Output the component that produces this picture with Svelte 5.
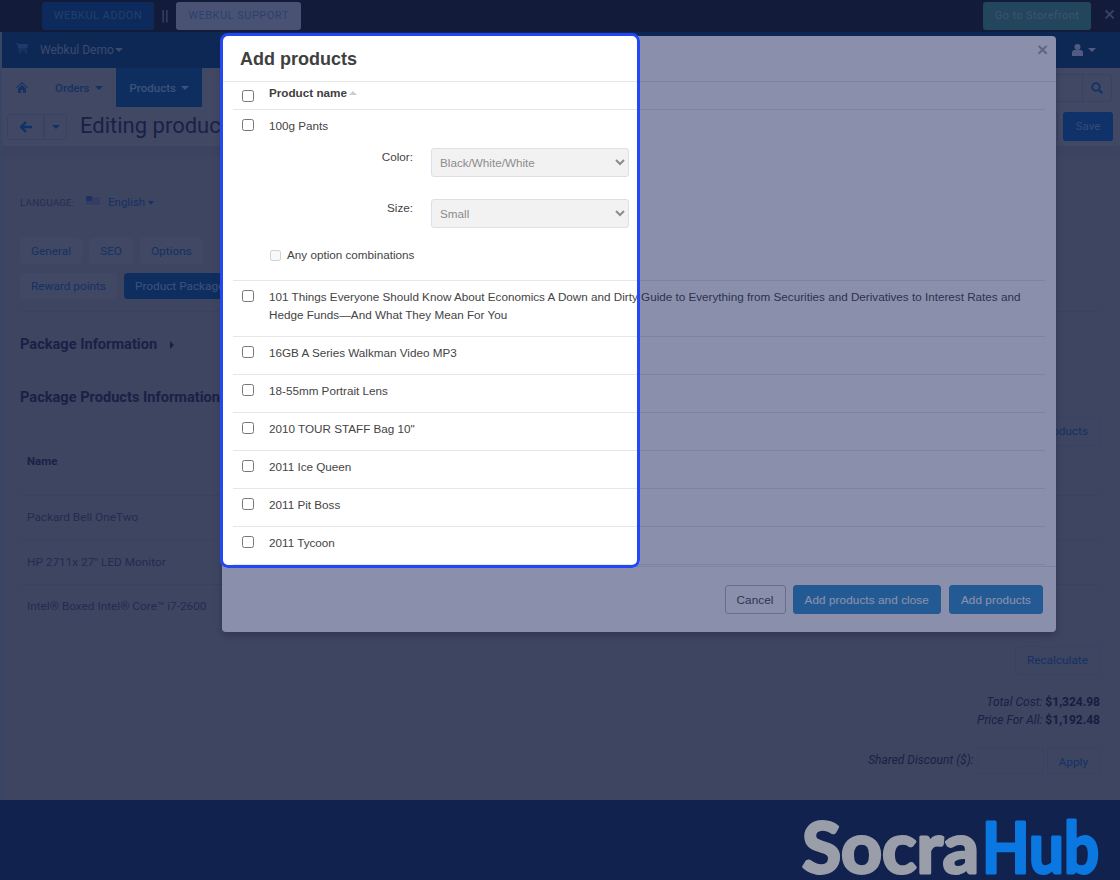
<script>
  const products = [
    { name: '16GB A Series Walkman Video MP3' },
    { name: '18-55mm Portrait Lens' },
    { name: '2010 TOUR STAFF Bag 10"' },
    { name: '2011 Ice Queen' },
    { name: '2011 Pit Boss' },
    { name: '2011 Tycoon' }
  ];
  const packageRows = ['Packard Bell OneTwo', 'HP 2711x 27" LED Monitor', 'Intel® Boxed Intel® Core™ i7-2600'];
</script>

<div class="page">
  <header class="topbar">
    <a class="top-btn addon">WEBKUL ADDON</a>
    <span class="sep">||</span>
    <a class="top-btn support">WEBKUL SUPPORT</a>
    <a class="top-btn store">Go to Storefront</a>
    <span class="top-close">×</span>
  </header>

  <div class="shell">
    <nav class="navbar">
      <svg class="cart" viewBox="0 0 12 10" width="12" height="10"><path d="M0 0h2l.4 1H12l-1 4.5H3.4l.2 1H11v1H2.8L1.4 1H0z" fill="currentColor"/><circle cx="4" cy="9" r="1" fill="currentColor"/><circle cx="10" cy="9" r="1" fill="currentColor"/></svg>
      <span class="brand">Webkul Demo</span><i class="caret"></i>
      <span class="grow"></span>
      <svg class="user" viewBox="0 0 11 12" width="11" height="12"><circle cx="5.5" cy="3" r="3" fill="currentColor"/><path d="M0 12V8.5C0 7 1.2 6 2.5 6h6C9.8 6 11 7 11 8.5V12z" fill="currentColor"/></svg>
      <i class="caret user-caret"></i>
    </nav>

    <div class="menu">
      <svg class="home" viewBox="0 0 12 11" width="12" height="11"><path d="M6 0l6 5.500-.7.7L6 1.500.7 6.200 0 5.500zM2 6.500L6 3l4 3.500V11H7V8H5v3H2z" fill="currentColor"/></svg>
      <span class="menu-item">Orders <i class="caret"></i></span>
      <span class="menu-item active">Products <i class="caret"></i></span>
      <span class="grow"></span>
      <div class="search">
        <span class="search-btn">
          <svg viewBox="0 0 12 12" width="12" height="12"><circle cx="5" cy="5" r="3.800" fill="none" stroke="currentColor" stroke-width="1.800"/><path d="M8 8l3.200 3.200" stroke="currentColor" stroke-width="2.200"/></svg>
        </span>
      </div>
    </div>

    <div class="toolbar">
      <span class="tool-btn back">
        <svg viewBox="0 0 12 12" width="12" height="12"><path d="M6 1L1 6l5 5M1.500 6H12" fill="none" stroke="currentColor" stroke-width="2.400"/></svg>
      </span>
      <span class="tool-btn more"><i class="caret"></i></span>
      <h1>Editing product</h1>
      <span class="grow"></span>
      <span class="tool-btn ghost"></span>
      <span class="save">Save</span>
    </div>

    <main class="content">
      <div class="language">
        <span class="lang-label">LANGUAGE:</span>
        <svg class="flag" viewBox="0 0 14 10" width="14" height="10"><rect width="14" height="10" fill="#6c6a74"/><path d="M0 2h14M0 4h14M0 6h14M0 8h14" stroke="#3f4763" stroke-width="1"/><rect width="6" height="5" fill="#2b3f72"/></svg>
        <span class="lang-name">English</span><i class="caret"></i>
      </div>

      <div class="tabs">
        <div class="tab-row">
          <span class="tab">General</span>
          <span class="tab">SEO</span>
          <span class="tab">Options</span>
        </div>
        <div class="tab-row">
          <span class="tab">Reward points</span>
          <span class="tab current">Product Packages</span>
        </div>
      </div>

      <h2 class="info">Package Information <i class="arrow-right"></i></h2>
      <h2 class="info second">Package Products Information</h2>

      <div class="right-line"><span class="btn add">Add products</span></div>

      <div class="name-head">Name</div>
      {#each packageRows as row}
        <div class="pack-row">{row}</div>
      {/each}

      <div class="right-line recalc"><span class="btn">Recalculate</span></div>

      <div class="totals">
        <div><em>Total Cost:</em> <b>$1,324.98</b></div>
        <div><em>Price For All:</em> <b>$1,192.48</b></div>
      </div>

      <div class="discount">
        <em>Shared Discount ($):</em>
        <input type="text" />
        <span class="btn apply">Apply</span>
      </div>
    </main>
  </div>

  <footer class="footer">
    <svg class="logo" viewBox="0 0 300 80" width="300" height="80">
      <text x="2" y="73" textLength="177" lengthAdjust="spacingAndGlyphs">Socra</text>
      <text class="hub" x="182" y="73" textLength="117" lengthAdjust="spacingAndGlyphs">Hub</text>
    </svg>
  </footer>

  <div class="modal">
    <div class="modal-head">
      <h3>Add products</h3>
      <span class="modal-close">×</span>
    </div>
    <div class="modal-body">
      <div class="row head">
        <input type="checkbox" class="check" />
        <strong>Product name</strong><i class="sort"></i>
      </div>
      <div class="row first">
        <input type="checkbox" class="check" />
        <div class="cell">100g Pants</div>
        <div class="opt color">
          <label for="color">Color:</label>
          <select id="color" disabled><option>Black/White/White</option></select>
        </div>
        <div class="opt size">
          <label for="size">Size:</label>
          <select id="size" disabled><option>Small</option></select>
        </div>
        <div class="any">
          <input type="checkbox" disabled />
          <span>Any option combinations</span>
        </div>
      </div>
      <div class="row two-line">
        <input type="checkbox" class="check" />
        <div class="cell">101 Things Everyone Should Know About Economics A Down and Dirty Guide to Everything from Securities and Derivatives to Interest Rates and Hedge Funds—And What They Mean For You</div>
      </div>
      {#each products as p}
        <div class="row">
          <input type="checkbox" class="check" />
          <div class="cell">{p.name}</div>
        </div>
      {/each}
    </div>
    <div class="modal-foot">
      <button class="m-btn cancel">Cancel</button>
      <button class="m-btn primary">Add products and close</button>
      <button class="m-btn primary last">Add products</button>
    </div>
  </div>

  <div class="spotlight"></div>
</div>

<style>
  :global(body) {
    margin: 0;
    background: #656969;
  }

  .page {
    position: relative;
    width: 1120px;
    height: 880px;
    overflow: hidden;
    display: flex;
    flex-direction: column;
    font-family: Roboto, sans-serif;
    font-size: 12px;
    color: #1c2036;
    background: #616568;
  }

  .grow { flex: 1; }

  .caret {
    display: inline-block;
    width: 0;
    height: 0;
    border-left: 4px solid transparent;
    border-right: 4px solid transparent;
    border-top: 4px solid currentColor;
    vertical-align: 2px;
  }

  /* top strip */
  .topbar {
    height: 32px;
    flex: none;
    display: flex;
    align-items: center;
    padding-left: 42px;
    background: #0f151d;
    box-sizing: border-box;
  }
  .top-btn {
    height: 28px;
    line-height: 28px;
    border-radius: 3px;
    text-align: center;
    font-size: 11px;
    letter-spacing: 0.5px;
  }
  .addon { width: 112px; background: #023460; color: #2a5d8c; }
  .sep { width: 22px; text-align: center; color: #6b7284; font-size: 15px; }
  .support { width: 125px; background: #7d838f; color: #3c6085; }
  .store { width: 108px; margin-left: 682px; background: #2f6a60; color: #707f88; letter-spacing: 0.4px; }
  .top-close { margin-left: 13px; color: #5d6479; font-size: 21px; line-height: 1; margin-top: -3px; }

  .shell {
    flex: 1;
    display: flex;
    flex-direction: column;
    min-height: 0;
    border-left: 2px solid #5a6870;
  }

  .navbar {
    height: 36px;
    flex: none;
    display: flex;
    align-items: center;
    padding: 0 24px 0 14px;
    background: #062f55;
    color: #62727f;
  }
  .cart { margin: -4px 12px 0 0; color: #2a5080; }
  .brand { margin-right: 1px; }
  .user { color: #8d93a8; margin-right: 5px; }
  .user-caret { color: #8d93a8; }

  .menu {
    height: 39px;
    flex: none;
    display: flex;
    align-items: center;
    padding: 0 8px 0 14px;
    background: #6b6f70;
    color: #16406f;
    font-weight: 500;
    font-size: 11.500px;
  }
  .home { margin-right: 13px; color: #16406f; }
  .menu-item {
    height: 100%;
    display: flex;
    align-items: center;
    gap: 5px;
    padding: 0 13px 0 14px;
  }
  .menu-item.active { background: #073a68; color: #65809e; }
  .search {
    width: 329px;
    height: 28px;
    border: 1px solid #5c6270;
    border-radius: 0 3px 3px 0;
    box-sizing: border-box;
    display: flex;
    justify-content: flex-end;
  }
  .search-btn {
    display: flex;
    justify-content: center;
    align-items: center;
    width: 28px;
    border-left: 1px solid #5c6270;
    color: #0b4278;
  }

  .toolbar {
    height: 39px;
    flex: none;
    display: flex;
    align-items: center;
    padding: 0 7px 0 5px;
    background: #6b6f70;
    border-radius: 0 0 4px 4px;
  }
  .tool-btn {
    height: 26px;
    border: 1px solid #5c6270;
    box-sizing: border-box;
    display: flex;
    align-items: center;
    justify-content: center;
    color: #0b4278;
  }
  .back { width: 37px; border-radius: 3px 0 0 3px; }
  .more { width: 23px; border-radius: 0 3px 3px 0; }
  h1 {
    margin: 0 0 3px 13px;
    font-size: 22px;
    font-weight: 400;
    color: #1c2036;
  }
  .ghost { width: 14px; height: 29px; border-radius: 0 3px 3px 0; border-left: none; }
  .save {
    width: 50px;
    height: 29px;
    line-height: 29px;
    margin-left: 5px;
    text-align: center;
    border-radius: 3px;
    background: #07427a;
    color: #587596;
    font-size: 11.500px;
  }

  .content {
    flex: 1;
    margin-top: 11px;
    padding: 38px 20px 0 18px;
    min-height: 0;
    background: #656969;
  }
  .language {
    display: flex;
    align-items: center;
    height: 14px;
  }
  .lang-label { width: 66px; font-size: 9.800px; color: #333850; letter-spacing: 0.2px; }
  .flag { margin: -3px 8px 0 0; }
  .lang-name { margin-right: 3px; font-size: 11.500px; color: #14406f; }
  .language .caret { color: #14406f; border-left-width: 3.500px; border-right-width: 3.500px; margin-bottom: -2px; }

  .tabs {
    display: flex;
    flex-direction: column;
    gap: 9px;
    margin-top: 29px;
    padding-bottom: 12px;
    border-bottom: 1px solid #5e6268;
  }
  .tab-row { display: flex; gap: 7px; }
  .tab {
    height: 26px;
    line-height: 26px;
    padding: 0 11px;
    border-radius: 4px;
    background: #6a6e70;
    color: #16406f;
    font-size: 11.800px;
  }
  .tab.current { background: #073a68; color: #65809e; width: 200px; box-sizing: border-box; }

  .info {
    margin: 22px 0 0;
    font-size: 14.600px;
    font-weight: 700;
    line-height: 20px;
    color: #1c2036;
  }
  .info.second { margin-top: 33px; }
  .arrow-right {
    display: inline-block;
    margin-left: 9px;
    width: 0;
    height: 0;
    border-top: 4px solid transparent;
    border-bottom: 4px solid transparent;
    border-left: 4px solid currentColor;
  }

  .right-line { display: flex; justify-content: flex-end; margin-top: 10px; }
  .btn {
    height: 29px;
    line-height: 27px;
    box-sizing: border-box;
    padding: 0 11px;
    border: 1px solid #5c6270;
    border-radius: 3px;
    color: #14406f;
    font-size: 11.800px;
  }

  .name-head {
    margin: 8px 0 0 7px;
    height: 41px;
    font-weight: 700;
    font-size: 11.500px;
    line-height: 14px;
    color: #1c2036;
  }
  .pack-row {
    padding: 0 7px;
    height: 43.500px;
    line-height: 43.500px;
    border-top: 1px solid #5e6268;
    font-size: 11.800px;
    color: #30354c;
  }
  .recalc { margin-top: 17px; }

  .totals {
    margin-top: 18px;
    text-align: right;
    line-height: 18px;
    font-size: 12px;
  }
  .totals em, .discount em { color: #1c2036; }
  .totals b { color: #14182c; font-weight: 700; }

  .discount {
    margin-top: 18px;
    display: flex;
    justify-content: flex-end;
    align-items: center;
    font-size: 12px;
  }
  .discount input {
    width: 67px;
    height: 27px;
    box-sizing: border-box;
    margin: 0 3px 0 3px;
    background: transparent;
    border: 1px solid #5c6270;
    border-radius: 3px;
  }
  .apply { height: 27px; line-height: 29px; }

  /* footer stays over the dimming layer */
  .footer {
    position: absolute;
    left: 0;
    right: 0;
    bottom: 0;
    height: 80px;
    z-index: 5;
    background: #12224f;
    overflow: hidden;
    display: flex;
    justify-content: flex-end;
    padding-right: 20px;
  }
  .logo text {
    font-family: Lato, sans-serif;
    font-size: 71px;
    font-weight: 700;
    fill: #9a9ea9;
    stroke: #9a9ea9;
    stroke-width: 3px;
    stroke-linejoin: round;
  }
  .logo text.hub { fill: #0a78e0; stroke: #0a78e0; }

  /* dialog */
  .modal {
    position: absolute;
    left: 222px;
    top: 36px;
    width: 834px;
    height: 596px;
    display: flex;
    flex-direction: column;
    background: #fff;
    border-radius: 4px;
    font-family: "Liberation Sans", Arial, sans-serif;
    font-size: 11.700px;
    color: #444;
    box-shadow: 0 3px 8px rgba(0, 0, 0, 0.3);
  }
  .modal-head {
    height: 45px;
    flex: none;
    display: flex;
    align-items: center;
    justify-content: space-between;
    padding: 0 8px 0 18px;
    border-bottom: 1px solid #e6e6e6;
  }
  h3 {
    margin: 2px 0 0;
    font-size: 18px;
    font-weight: 700;
    color: #404040;
  }
  .modal-close {
    font-size: 19px;
    font-weight: 700;
    color: #aaa;
    margin-top: -17px;
  }
  .modal-body {
    height: 484px;
    flex: none;
    padding: 0 11px;
    overflow: hidden;
    border-bottom: 1px solid #e6e6e6;
  }
  .row {
    position: relative;
    height: 37px;
    padding: 0 0 0 36px;
    border-bottom: 1px solid #e6e6e6;
    line-height: 18px;
  }
  .row.head { height: 27px; }
  .row.head strong { line-height: 22px; color: #404040; }
  .row.first { height: 170px; }
  .row.two-line { height: 55px; }
  .check {
    position: absolute;
    left: 9px;
    top: 9px;
    width: 12px;
    height: 12px;
    margin: 0;
  }
  .row.head .check { top: 8px; }
  .cell { padding-top: 7px; }
  .sort {
    display: inline-block;
    margin: 0 0 2px 2px;
    width: 0;
    height: 0;
    border-left: 4px solid transparent;
    border-right: 4px solid transparent;
    border-bottom: 4px solid #ccc;
    vertical-align: middle;
  }
  .opt {
    display: flex;
    align-items: flex-start;
    justify-content: flex-end;
    width: 360px;
    margin-top: 13px;
    gap: 18px;
  }
  .opt.size { margin-top: 22px; }
  .opt label { line-height: 18px; }
  .opt select {
    width: 198px;
    height: 29px;
    padding: 0 4px;
    font: inherit;
    color: #8c8c8c;
    opacity: 1;
    background-color: #f2f2f2;
    border: 1px solid #dbe0e8;
    border-radius: 3px;
  }
  .any {
    display: flex;
    align-items: center;
    gap: 6px;
    margin-top: 18px;
  }
  .any input {
    width: 11px;
    height: 11px;
    margin: 0 0 0 1px;
  }

  .modal-foot {
    flex: 1;
    display: flex;
    align-items: center;
    justify-content: flex-end;
    gap: 7px;
    padding: 0 13px 0 0;
  }
  .m-btn {
    height: 29px;
    padding: 0 11px;
    border-radius: 3px;
    font: inherit;
    letter-spacing: 0.1px;
  }
  .m-btn.last { margin-left: 1px; }
  .cancel { background: #fff; border: 1px solid #bbb; color: #444; }
  .primary { background: #3393d1; border: 1px solid #3393d1; color: #fff; }

  /* tour highlight: the huge shadow dims all but the hole */
  .spotlight {
    position: absolute;
    left: 220px;
    top: 33px;
    width: 420px;
    height: 535px;
    box-sizing: border-box;
    border: 3px solid #2247f5;
    border-radius: 8px;
    box-shadow: 0 0 0 2000px rgba(21, 33, 87, 0.5);
    z-index: 4;
    pointer-events: none;
  }
</style>
